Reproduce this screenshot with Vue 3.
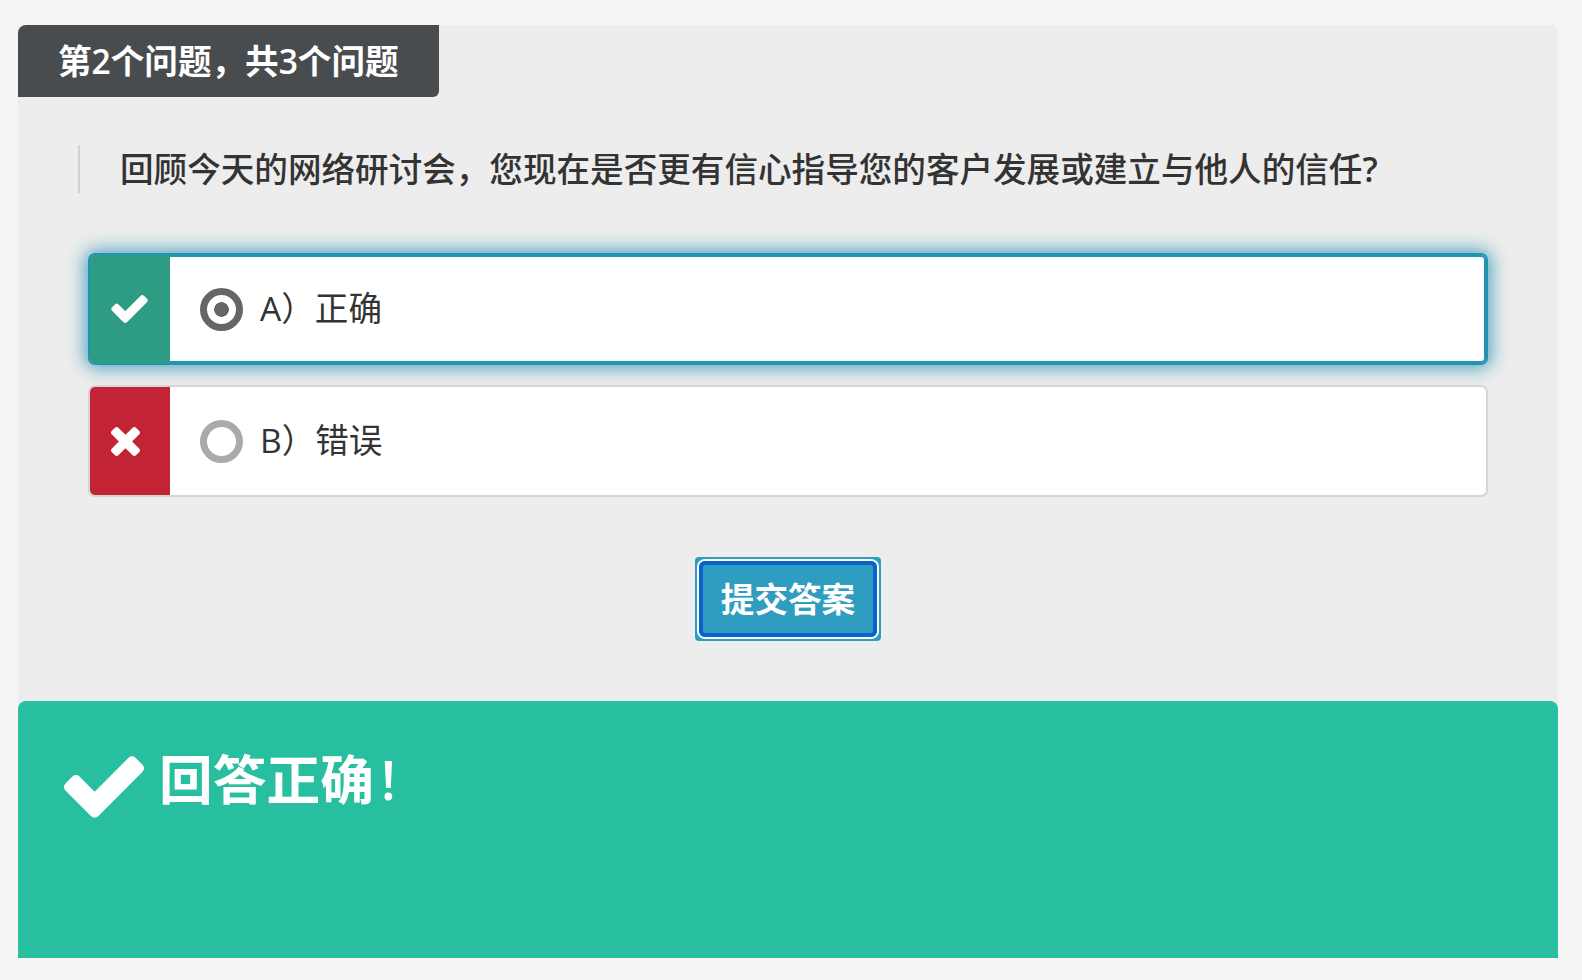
<script setup>
const options = [
  { key: 'a', label: 'A）正确', correct: true, selected: true },
  { key: 'b', label: 'B）错误', correct: false, selected: false },
]
const checkPath = 'M1671 566q0 40-28 68l-724 724-136 136q-28 28-68 28t-68-28l-136-136-362-362q-28-28-28-68t28-68l136-136q28-28 68-28t68 28l294 295 656-657q28-28 68-28t68 28l136 136q28 28 28 68z'
const crossPath = 'M1298 1214q0 40-28 68l-136 136q-28 28-68 28t-68-28l-294-294-294 294q-28 28-68 28t-68-28l-136-136q-28-28-28-68t28-68l294-294-294-294q-28-28-28-68t28-68l136-136q28-28 68-28t68 28l294 294 294-294q28-28 68-28t68 28l136 136q28 28 28 68t-28 68l-294 294 294 294q28 28 28 68z'
</script>

<template>
  <div class="page">
    <main class="panel">
      <div class="tab">第2个问题，共3个问题</div>
      <blockquote class="question">回顾今天的网络研讨会，您现在是否更有信心指导您的客户发展或建立与他人的信任<span class="qmark">?</span></blockquote>
      <div class="options">
        <div
          v-for="o in options"
          :key="o.key"
          class="option"
          :class="{ selected: o.selected }"
        >
          <div class="mark" :class="o.correct ? 'mark-ok' : 'mark-bad'">
            <svg v-if="o.correct" class="icon-check" viewBox="121 334 1550 1188"><path :d="checkPath" /></svg>
            <svg v-else class="icon-cross" viewBox="110 258 1188 1188"><path :d="crossPath" /></svg>
          </div>
          <span class="radio"></span>
          <span class="label">{{ o.label }}</span>
        </div>
      </div>
      <div class="actions">
        <button class="submit" type="button"><span class="submit-inner">提交答案</span></button>
      </div>
      <section class="result">
        <svg class="icon-result" viewBox="121 334 1550 1188"><path :d="checkPath" /></svg>
        <span class="result-text">回答正确<span class="bang">!</span></span>
      </section>
    </main>
  </div>
</template>

<style>
html, body { margin: 0; background: #f5f5f5; }
</style>

<style scoped>
.page {
  box-sizing: border-box;
  height: 980px;
  padding: 25px 24px 22px 18px;
  font-family: "Open Sans", "Noto Sans CJK SC", sans-serif;
  color: #333;
}
.panel {
  display: flex;
  flex-direction: column;
  align-items: flex-start;
  height: 933px;
  background: #ededed;
  border-radius: 8px 8px 0 0;
}
.tab {
  box-sizing: border-box;
  width: 421px;
  height: 72px;
  padding-left: 40px;
  background: #494c4f;
  border-radius: 8px 0 6px 0;
  color: #fff;
  font-size: 33.6px;
  font-weight: 600;
  line-height: 72px;
  white-space: nowrap;
}
.question {
  box-sizing: border-box;
  height: 48px;
  margin: 48px 0 0 60px;
  padding-left: 40px;
  border-left: 2px solid #d2d2d2;
  font-size: 33.6px;
  font-weight: 500;
  line-height: 48px;
  white-space: nowrap;
}
.qmark { font-weight: 600; }
.options {
  display: flex;
  flex-direction: column;
  gap: 20px;
  width: 1400px;
  margin: 60px 0 0 70px;
}
.option {
  box-sizing: border-box;
  display: flex;
  align-items: center;
  height: 112px;
  background: #fff;
  border: 2px solid #d4d6d6;
  border-radius: 7px;
  overflow: hidden;
}
.option.selected {
  border-color: #2492b3;
  box-shadow: inset 0 0 0 2px #2492b3, 0 0 18px 3px rgba(36, 146, 179, 0.8);
}
.mark {
  display: flex;
  align-items: center;
  justify-content: center;
  flex: none;
  align-self: stretch;
  width: 80px;
}
.mark-ok { background: #2e9c82; }
.mark-bad { background: #c22335; }
.mark svg { fill: #fff; display: block; }
.icon-check { width: 37px; height: 28px; margin-right: 1px; }
.icon-cross { width: 29px; height: 29px; margin-right: 10px; }
.radio {
  box-sizing: border-box;
  flex: none;
  width: 43px;
  height: 43px;
  margin-left: 30px;
  border: 7px solid #aaa;
  border-radius: 50%;
  background: #fff;
}
.selected .radio {
  border-color: #666;
  background: radial-gradient(circle, #666 7px, #fff 7.6px);
}
.label {
  margin: -2px 0 0 17px;
  font-size: 33.6px;
  line-height: 44px;
  white-space: nowrap;
}
.actions {
  align-self: stretch;
  display: flex;
  justify-content: center;
  margin-top: 60px;
}
.submit {
  box-sizing: border-box;
  width: 186px;
  height: 84px;
  padding: 2px;
  border: 2px solid #2f9dbf;
  border-radius: 4px;
  outline: none;
  background: #2f9dbf;
  color: #fff;
  font-family: inherit;
  font-size: 33.6px;
  font-weight: 700;
}
.submit-inner {
  box-sizing: border-box;
  display: block;
  height: 100%;
  border: 4px solid #0a62cc;
  border-radius: 6px;
  box-shadow: 0 0 0 2px #fff;
  line-height: 68px;
}
.result {
  box-sizing: border-box;
  align-self: stretch;
  display: flex;
  align-items: flex-start;
  flex: 1;
  margin-top: 60px;
  padding: 55px 0 0 46px;
  background: #27bf9f;
  border-radius: 8px 8px 0 0;
  color: #fff;
}
.icon-result {
  flex: none;
  display: block;
  width: 80px;
  height: 62px;
  fill: #fff;
}
.result-text {
  margin: -14px 0 0 15px;
  font-size: 53.76px;
  font-weight: 600;
  line-height: 76px;
  white-space: nowrap;
}
.bang { margin-left: 7px; }
</style>
